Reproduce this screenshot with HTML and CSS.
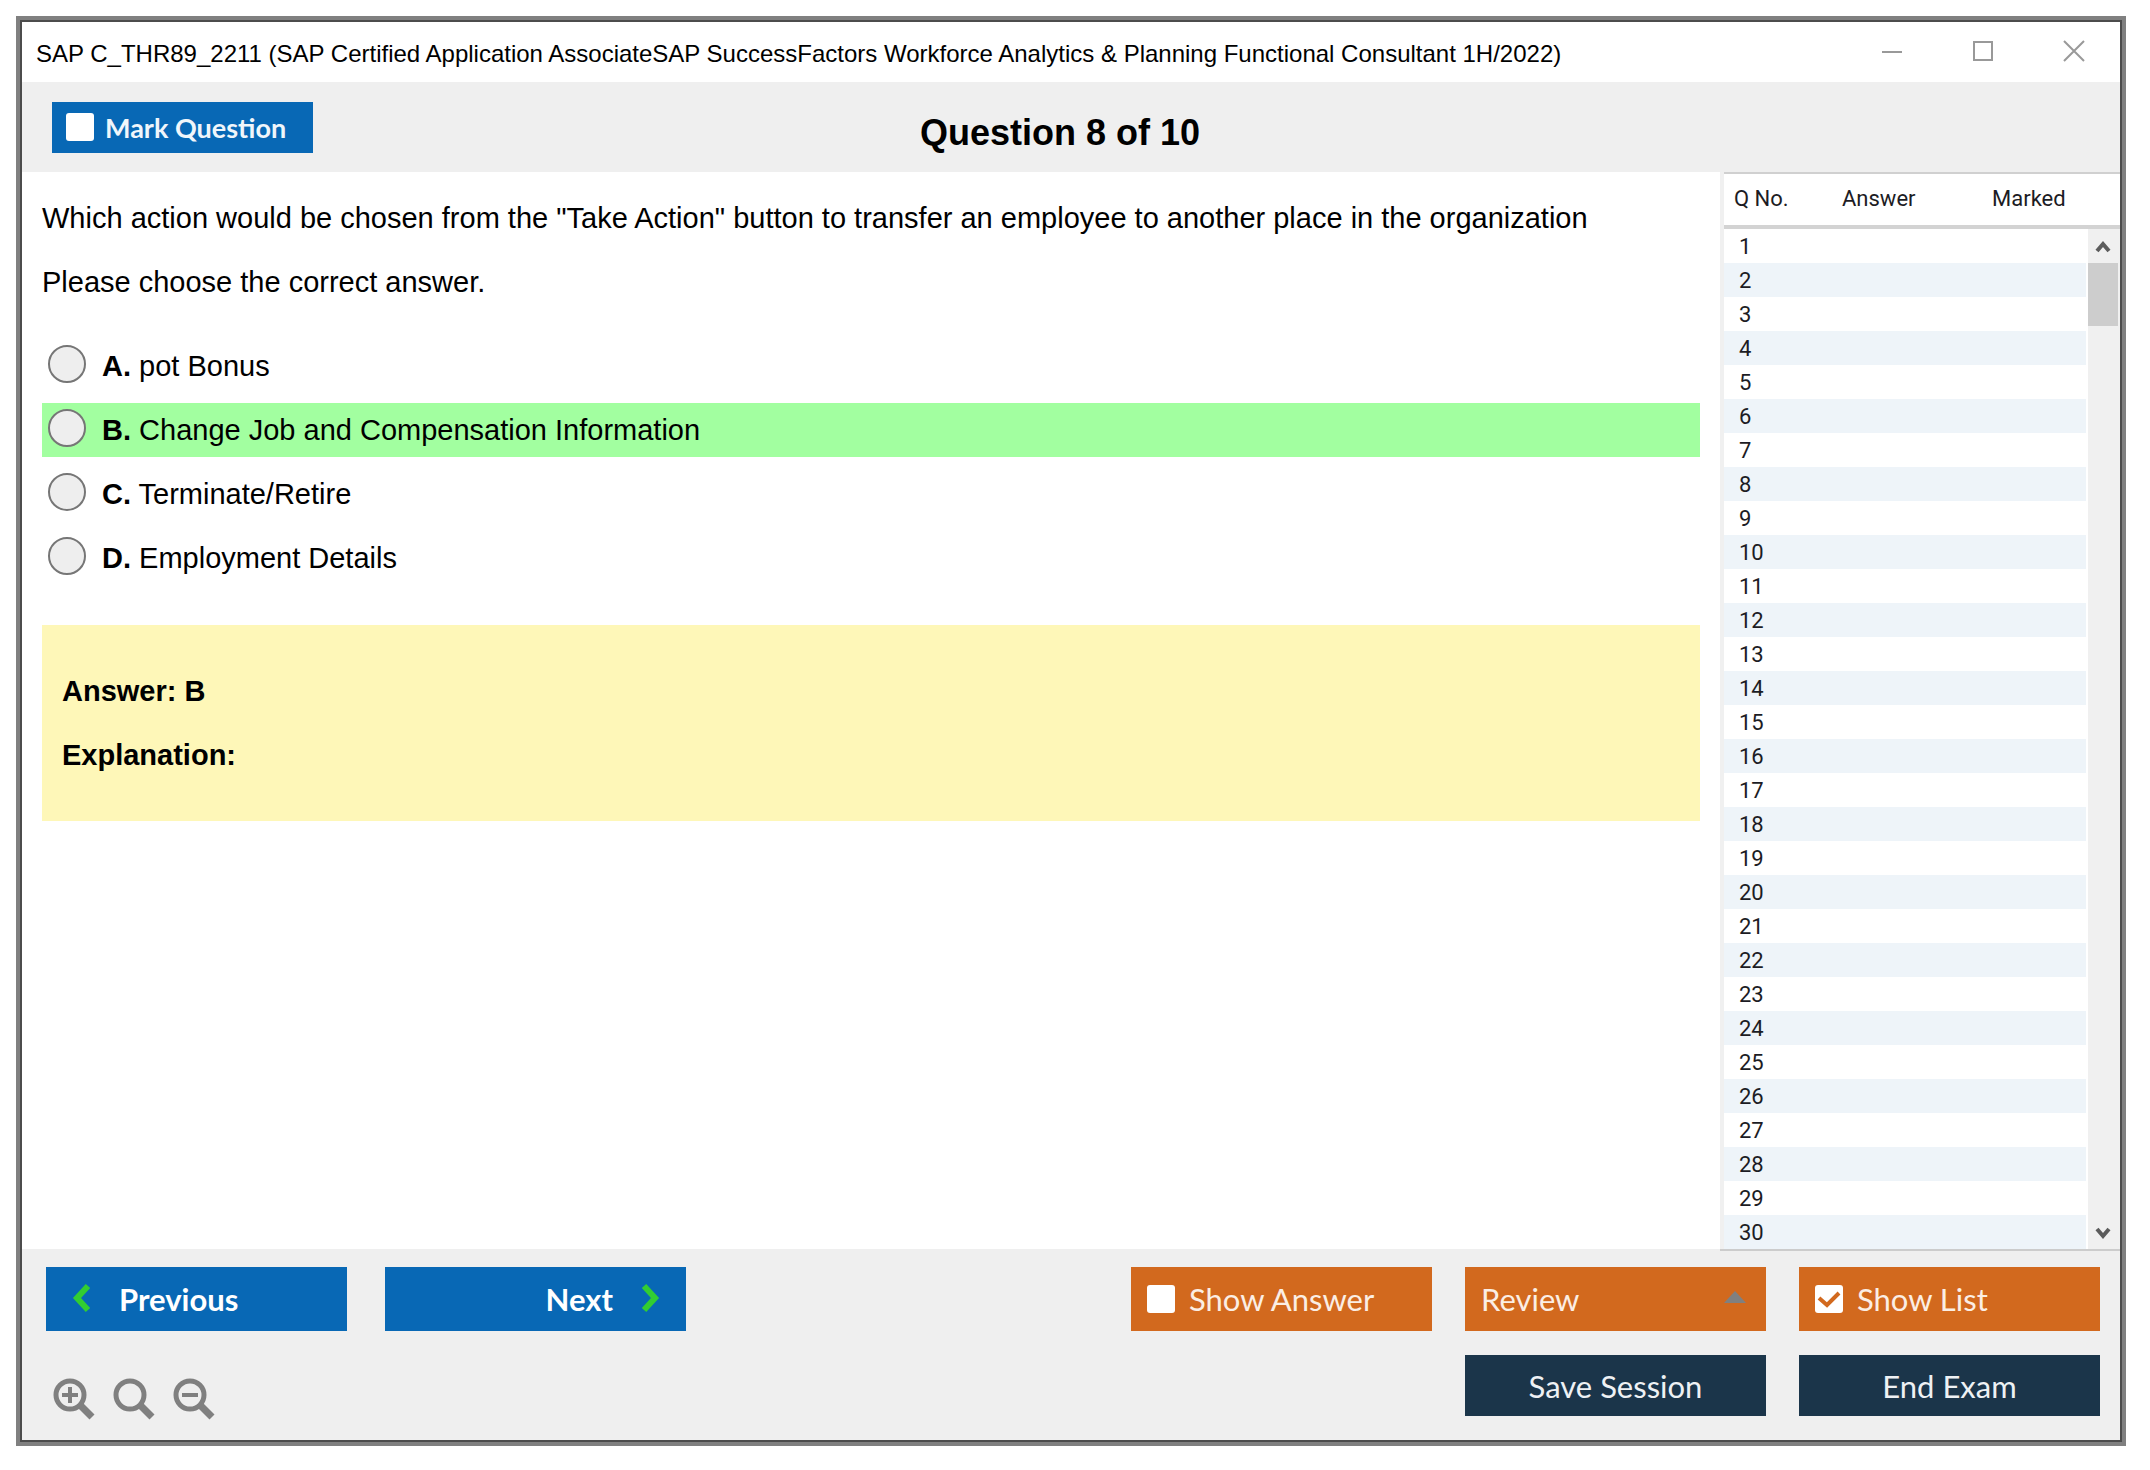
FILE: index.html
```html
<!DOCTYPE html>
<html lang="en">

<head>
    <meta charset="UTF-8">
    <meta name="viewport" content="width=device-width, initial-scale=1.0">
    <title>SAP C_THR89_2211</title>
    <link rel="stylesheet" href="styles.css">
</head>

<body>
    <div class="window">
        <header class="titlebar">
            <span class="title">SAP C_THR89_2211 (SAP Certified Application AssociateSAP SuccessFactors Workforce Analytics &amp; Planning Functional Consultant 1H/2022)</span>
            <div class="window-controls">
                <button type="button" aria-label="Minimize">
                    <svg width="22" height="22" viewBox="0 0 22 22"><path d="M1 12h20" /></svg>
                </button>
                <button type="button" aria-label="Maximize">
                    <svg width="22" height="22" viewBox="0 0 22 22"><path d="M2 2h18v18H2z" /></svg>
                </button>
                <button type="button" aria-label="Close">
                    <svg width="22" height="22" viewBox="0 0 22 22"><path d="M1 1l20 20M21 1L1 21" /></svg>
                </button>
            </div>
        </header>

        <div class="toolbar">
            <label class="mark"><input type="checkbox" class="check" name="mark">Mark Question</label>
            <h1>Question 8 of 10</h1>
        </div>

        <div class="main">
            <main class="content">
                <p>Which action would be chosen from the "Take Action" button to transfer an employee to another place in the organization</p>
                <p>Please choose the correct answer.</p>
                <div class="options">
                    <label class="option"><input type="radio" name="answer" value="A"><span><b>A.</b> pot Bonus</span></label>
                    <label class="option correct"><input type="radio" name="answer" value="B"><span><b>B.</b> Change Job and Compensation Information</span></label>
                    <label class="option"><input type="radio" name="answer" value="C"><span><b>C.</b> Terminate/Retire</span></label>
                    <label class="option"><input type="radio" name="answer" value="D"><span><b>D.</b> Employment Details</span></label>
                </div>
                <div class="answer-box">
                    <p>Answer: B</p>
                    <p>Explanation:</p>
                </div>
            </main>

            <aside class="list">
                <table>
                    <thead>
                        <tr>
                            <th class="col-no">Q No.</th>
                            <th class="col-answer">Answer</th>
                            <th>Marked</th>
                        </tr>
                    </thead>
                    <tbody id="questionsBody">
                    </tbody>
                </table>
                <div class="scrollbar">
                    <svg width="30" height="34" viewBox="0 0 30 34"><path d="M9 22l6-7 6 7" /></svg>
                    <div class="thumb"></div>
                    <svg width="30" height="34" viewBox="0 0 30 34"><path d="M9 14l6 7 6-7" /></svg>
                </div>
            </aside>
        </div>

        <footer class="footer">
            <div class="nav">
                <div class="row">
                    <button type="button" class="btn btn-blue">
                        <svg class="chevron" width="20" height="30" viewBox="0 0 20 30"><path d="M17 2L6 14l11 12" /></svg>
                        Previous
                    </button>
                    <button type="button" class="btn btn-blue btn-next">
                        Next
                        <svg class="chevron" width="20" height="30" viewBox="0 0 20 30"><path d="M3 2l11 12L3 26" /></svg>
                    </button>
                </div>
                <div class="zoom">
                    <button type="button" aria-label="Zoom in">
                        <svg width="44" height="44" viewBox="0 0 44 44"><circle cx="18" cy="18" r="14" /><path class="handle" d="M28 28l12 12" /><path class="sign" d="M10 18h16M18 10v16" /></svg>
                    </button>
                    <button type="button" aria-label="Reset zoom">
                        <svg width="44" height="44" viewBox="0 0 44 44"><circle cx="18" cy="18" r="14" /><path class="handle" d="M28 28l12 12" /></svg>
                    </button>
                    <button type="button" aria-label="Zoom out">
                        <svg width="44" height="44" viewBox="0 0 44 44"><circle cx="18" cy="18" r="14" /><path class="handle" d="M28 28l12 12" /><path class="sign" d="M10 18h16" /></svg>
                    </button>
                </div>
            </div>

            <div class="actions">
                <label class="btn btn-orange"><input type="checkbox" class="check" name="showAnswer">Show Answer</label>
                <div class="review">
                    <select class="btn btn-orange" aria-label="Review">
                        <option>Review</option>
                    </select>
                    <svg width="22" height="12" viewBox="0 0 22 12"><path d="M0 12L11 0l11 12z" /></svg>
                </div>
                <label class="btn btn-orange"><input type="checkbox" class="check" name="showList" checked>Show List</label>
                <button type="button" class="btn btn-dark btn-save">Save Session</button>
                <button type="button" class="btn btn-dark">End Exam</button>
            </div>
        </footer>
    </div>

    <script>
        // fill the question list
        const questionsBody = document.getElementById('questionsBody');
        for (let i = 1; i <= 30; i++) {
            const tr = document.createElement('tr');
            tr.innerHTML = `<td>${i}</td><td></td><td></td>`;
            questionsBody.appendChild(tr);
        }
    </script>
</body>

</html>
```
FILE: styles.css
```css
* {
    box-sizing: border-box;
}

body {
    margin: 0;
    padding: 16px 24px 24px 16px;
    min-height: 100vh;
    display: flex;
    background-color: #fff;
    color: #000;
    font-family: "Liberation Sans", Arial, sans-serif;
    font-size: 29px;
}

button,
select {
    margin: 0;
    border: none;
    font-family: inherit;
    cursor: pointer;
}

svg {
    display: block;
    fill: none;
}

.window {
    flex: 1;
    display: flex;
    flex-direction: column;
    border: 4px solid #808080;
    outline: 2px solid #4c4c4c;
    outline-offset: -6px;
    padding: 2px;
}

/* title bar */
.titlebar {
    display: flex;
    align-items: center;
    justify-content: space-between;
    height: 60px;
    padding: 0 35px 2px 14px;
}

.title {
    font-size: 24px;
    padding-top: 5px;
}

.window-controls {
    display: flex;
    gap: 69px;
}

.window-controls button {
    padding: 0;
    background: none;
}

.window-controls svg {
    stroke: #999;
    stroke-width: 2;
}

/* question toolbar */
.toolbar {
    display: grid;
    grid-template-columns: 1fr auto 1fr;
    align-items: center;
    height: 90px;
    padding: 0 52px 0 30px;
    background-color: #efefef;
}

.toolbar h1 {
    margin: 0;
    padding-top: 12px;
    font-size: 36px;
}

.mark {
    justify-self: start;
    display: flex;
    align-items: center;
    gap: 11px;
    width: 261px;
    height: 51px;
    padding-left: 14px;
    background-color: #0868b5;
    color: #f0f6fb;
    font-family: Lato, sans-serif;
    font-size: 27px;
    font-weight: bold;
}

.check {
    appearance: none;
    flex: none;
    width: 28px;
    height: 28px;
    margin: 0;
    border-radius: 3px;
    background-color: #fff;
}

.check:checked {
    background-image: url("data:image/svg+xml,%3Csvg xmlns='http://www.w3.org/2000/svg' viewBox='0 0 28 28'%3E%3Cpath d='M4 13l8 7L24 8' fill='none' stroke='%23d2691e' stroke-width='4'/%3E%3C/svg%3E");
}

/* question and answers */
.main {
    flex: 1;
    display: flex;
}

.content {
    flex: 1;
    padding: 14px 20px;
}

.content p {
    margin: 0;
    line-height: 64px;
}

.options {
    display: flex;
    flex-direction: column;
    gap: 10px;
    margin: 25px 0 40px;
}

.option {
    display: flex;
    align-items: center;
    gap: 16px;
    height: 54px;
    padding-left: 6px;
}

.option input {
    appearance: none;
    width: 38px;
    height: 38px;
    margin: 0 0 4px;
    border: 2px solid #767676;
    border-radius: 50%;
    background-color: #eee;
}

.correct {
    background-color: #a2ffa0;
}

.answer-box {
    padding: 34px 20px;
    background-color: #fef7b8;
    font-weight: bold;
}

/* question list */
.list {
    position: relative;
    width: 400px;
    border-left: 4px solid #f0f0f0;
    box-shadow: 0 2px #ccc;
    font-family: Roboto, sans-serif;
    font-size: 22px;
    color: #1c1c24;
}

.list table {
    width: 100%;
    border-collapse: separate;
    border-spacing: 0;
}

.list th {
    height: 57px;
    padding: 0 0 2px 10px;
    border-top: 2px solid #d0d0d0;
    border-bottom: 4px solid #d3d3d3;
    font-weight: normal;
    text-align: left;
}

.list td {
    height: 34px;
    padding: 0 0 0 15px;
}

.list tbody tr:nth-child(even) {
    background-color: #eef4f9;
}

.col-no {
    width: 108px;
}

.col-answer {
    width: 150px;
}

.scrollbar {
    position: absolute;
    top: 57px;
    right: 0;
    bottom: 0;
    display: flex;
    flex-direction: column;
    width: 34px;
    border-left: 2px solid #fff;
    background-color: #f0f0f0;
}

.scrollbar svg {
    stroke: #5c5c5c;
    stroke-width: 4;
}

.thumb {
    width: 30px;
    height: 63px;
    margin-bottom: auto;
    background-color: #cdcdcd;
}

/* footer */
.footer {
    display: flex;
    justify-content: space-between;
    align-items: flex-start;
    height: 191px;
    padding: 18px 20px 0 24px;
    background-color: #efefef;
}

.row {
    display: flex;
    gap: 38px;
}

.btn {
    display: flex;
    align-items: center;
    width: 301px;
    height: 64px;
    padding: 0 16px;
    font-family: Lato, sans-serif;
    font-size: 31px;
}

.btn-blue {
    gap: 28px;
    padding: 0 25px;
    background-color: #0868b5;
    color: #fff;
    font-weight: bold;
}

.btn-next {
    justify-content: flex-end;
}

.chevron {
    stroke: #32cd32;
    stroke-width: 6;
}

.btn-orange {
    gap: 14px;
    background-color: #d2691e;
    color: #fbeee4;
}

.btn-dark {
    justify-content: center;
    height: 61px;
    background-color: #1b354a;
    color: #eef1f4;
}

.actions {
    display: grid;
    grid-template-columns: repeat(3, auto);
    gap: 24px 33px;
}

.btn-save {
    grid-column: 2;
}

.review {
    position: relative;
}

.review select {
    appearance: none;
}

.review svg {
    position: absolute;
    top: 24px;
    right: 20px;
    fill: #808080;
    pointer-events: none;
}

.zoom {
    display: flex;
    gap: 16px;
    margin-top: 46px;
    padding-left: 6px;
}

.zoom button {
    padding: 0;
    background: none;
}

.zoom svg {
    stroke: #808080;
    stroke-width: 5;
}

.zoom .handle {
    stroke-width: 7;
}

.zoom .sign {
    stroke-width: 4;
}
```
